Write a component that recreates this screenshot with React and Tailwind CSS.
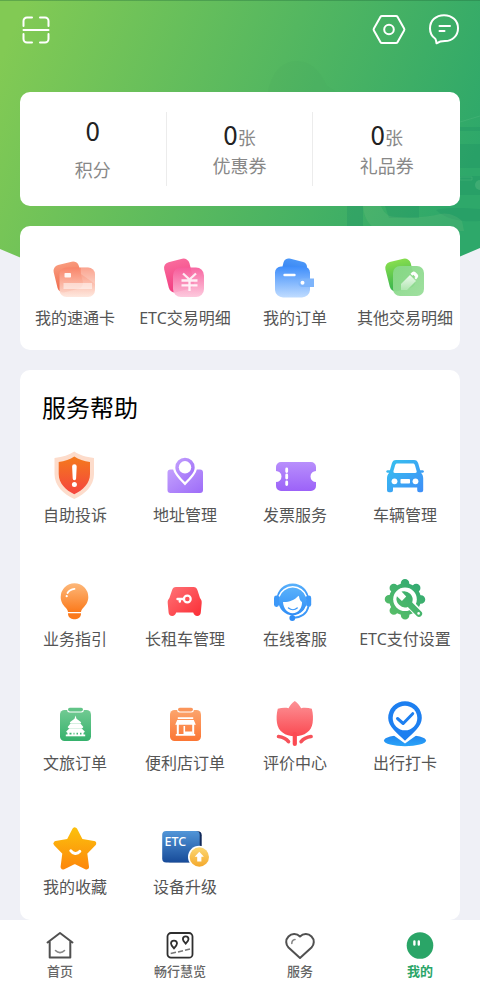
const Gradient = ({ id, from, to, diagonal }) => (
  <defs>
    <linearGradient id={id} x1="0" y1="0" x2={diagonal ? "1" : "0"} y2="1">
      <stop offset="0" stopColor={from} />
      <stop offset="1" stopColor={to} />
    </linearGradient>
  </defs>
);

const Icon = ({ children }) => (
  <svg viewBox="0 0 48 48" className="size-12" aria-hidden="true">
    {children}
  </svg>
);

/* Quick entries */
const CardIcon = () => (
  <Icon>
    <Gradient id="cardBack" from="#f99a7c" to="#ee6547" />
    <Gradient id="cardFront" from="#f98468" to="#fee6dc" />
    <rect x="4" y="9" width="26" height="28" rx="6" fill="url(#cardBack)" transform="rotate(-14 17 22)" />
    <rect x="8.5" y="13.5" width="35.5" height="29.5" rx="7" fill="url(#cardFront)" fillOpacity="0.92" />
    <path d="M30 13.5h7a7 7 0 0 1 7 7V30L30 20z" fill="#fff" opacity="0.2" />
    <rect x="13.5" y="19" width="6.5" height="4.5" rx="0.8" fill="#fff" opacity="0.9" />
    <rect x="12.5" y="29" width="28.5" height="6" fill="#fff" opacity="0.5" />
  </Icon>
);

const YenIcon = () => (
  <Icon>
    <Gradient id="yenBack" from="#f96a9c" to="#f23c80" />
    <Gradient id="yenFront" from="#f75c9b" to="#fdc5db" />
    <rect x="5" y="6" width="26" height="31" rx="6" fill="url(#yenBack)" transform="rotate(-14 18 21)" />
    <rect x="12" y="13.5" width="31" height="29.5" rx="8" fill="url(#yenFront)" fillOpacity="0.93" />
    <path
      d="M22 19.5l6.500 6 6.500-6M20.500 26.500h16M20.500 31.300h16M28.500 26v11"
      fill="none"
      stroke="#fff"
      strokeWidth="2.3"
      opacity="0.85"
    />
  </Icon>
);

const WalletIcon = () => (
  <Icon>
    <Gradient id="walletBack" from="#4b97f8" to="#2a78ee" />
    <Gradient id="walletFront" from="#3f8efb" to="#c0dcff" />
    <rect x="11" y="6" width="24" height="20" rx="5" fill="url(#walletBack)" transform="rotate(14 23 16)" />
    <path
      d="M10 12.5h23a6 6 0 0 1 6 6V36a8 8 0 0 1-8 7.5H12A8 8 0 0 1 4 36V18.5a6 6 0 0 1 6-6z"
      fill="url(#walletFront)"
    />
    <path d="M31.5 24.5H43V33H31.5a4.2 4.2 0 0 1 0-8.500z" fill="#7db4fb" />
    <circle cx="31.5" cy="28.7" r="2" fill="#fff" />
    <path d="M13.5 21h10" stroke="#fff" strokeWidth="2.4" strokeLinecap="round" />
  </Icon>
);

const PencilIcon = () => (
  <Icon>
    <Gradient id="noteBack" from="#86dd4e" to="#33b14e" />
    <Gradient id="noteFront" from="#86d886" to="#9ade9a" diagonal />
    <Gradient id="notePencil" from="#ffffff" to="#b6e8b6" />
    <rect x="6" y="6" width="26" height="30" rx="6" fill="url(#noteBack)" transform="rotate(-14 19 20)" />
    <rect x="12" y="12" width="31" height="30" rx="7" fill="url(#noteFront)" fillOpacity="0.95" />
    <path d="M20 36v-6l9-9 6 6-9 9z" fill="url(#notePencil)" opacity="0.85" />
    <path
      d="M29.5 19.8l1.5-1.5a2.5 2.5 0 0 1 3.5 0l2 2a2.5 2.5 0 0 1 0 3.5L35 25.500l-1.500-1.500 1-1-2.200-2.200-1 1z"
      fill="#fff"
    />
  </Icon>
);

/* Service entries */
const ShieldIcon = () => (
  <Icon>
    <Gradient id="shield" from="#f47a1c" to="#f5443f" />
    <path
      d="M23.3 0.500C28 4 35 6 43 7v16c0 12-9 20-19.700 25C12.500 43 3.500 35 3.500 23V7C11.500 6 18.500 4 23.300 0.500z"
      fill="#fddccb"
    />
    <path
      d="M23.3 5.500C27.500 8.500 33 10.300 39 11v12c0 9.500-7 16-15.700 20.300C14.700 39 7.700 32.500 7.700 23V11c6-.7 11.500-2.500 15.600-5.500z"
      fill="url(#shield)"
    />
    <path d="M21.1 15.5a2.3 2.3 0 0 1 4.600 0l-.6 12a1.700 1.700 0 0 1-3.400 0z" fill="#fff" />
    <circle cx="23.4" cy="33.5" r="2.5" fill="#fff" />
  </Icon>
);

const MapPinIcon = () => (
  <Icon>
    <Gradient id="mapPad" from="#c3a0fd" to="#9d6cf8" diagonal />
    <rect x="6.5" y="18.5" width="35.5" height="23.5" rx="3" fill="url(#mapPad)" />
    <path d="M24 4.500a12 12 0 0 0-12 12c0 6 6 11.500 12 18 6-6.500 12-12 12-18a12 12 0 0 0-12-12z" fill="#fff" />
    <path
      d="M24 6.700a9.700 9.700 0 0 0-9.700 9.700c0 5 5 9.600 9.700 14.600 4.700-5 9.700-9.600 9.700-14.600A9.700 9.700 0 0 0 24 6.700z"
      fill="url(#mapPad)"
    />
    <circle cx="24" cy="16.3" r="6.2" fill="#fff" />
  </Icon>
);

const TicketIcon = () => (
  <Icon>
    <Gradient id="ticket" from="#b88ffc" to="#9c62f8" />
    <path
      d="M10 11h30a5 5 0 0 1 5 5v4a5.500 5.500 0 0 0 0 11v4a5 5 0 0 1-5 5H10a5 5 0 0 1-5-5v-4a5.500 5.500 0 0 0 0-11v-4a5 5 0 0 1 5-5z"
      fill="url(#ticket)"
    />
    <path d="M15.7 18v2.500M15.700 24v3M15.700 31v2.500" stroke="#fff" strokeWidth="2.8" strokeLinecap="round" />
  </Icon>
);

const CarIcon = () => (
  <Icon>
    <Gradient id="car" from="#36c3ee" to="#3f8df8" diagonal />
    <path
      d="M15 9h18c2.300 0 3.600 1.200 4.200 3.300l2 7h2.600c1.600 0 1.600 2.500 0 2.500H40c1.500 1.500 2.200 3.500 2.200 5.500v12a2 2 0 0 1-2 2h-2a2 2 0 0 1-2-2v-2.800H12v2.800a2 2 0 0 1-2 2H8a2 2 0 0 1-2-2v-12c0-2 .7-4 2.200-5.500H6.400c-1.600 0-1.600-2.500 0-2.500h2.500l2-7C11.500 10.200 12.700 9 15 9z"
      fill="url(#car)"
    />
    <path
      d="M16.3 12.500h15.500c1.200 0 1.800.6 2.100 1.600l1.700 6c.3 1.200-.2 1.900-1.400 1.900H13.900c-1.200 0-1.700-.7-1.400-1.900l1.700-6c.3-1 .9-1.600 2.100-1.600z"
      fill="#fff"
    />
    <circle cx="13.5" cy="30.3" r="2.9" fill="#fff" />
    <circle cx="34.5" cy="30.3" r="2.9" fill="#fff" />
    <rect x="19.5" y="28" width="9.5" height="4.5" rx="0.8" fill="#fff" />
  </Icon>
);

const BulbIcon = () => (
  <Icon>
    <Gradient id="bulb" from="#fdb87a" to="#fb7a1c" />
    <path
      d="M23.5 8.300a13.800 13.800 0 0 0-13.800 13.800c0 4.800 2.400 8 5 10.700 1.300 1.400 2 2.600 2.300 4.200h13c.3-1.600 1-2.800 2.300-4.200 2.600-2.700 5-5.900 5-10.700A13.800 13.800 0 0 0 23.500 8.300z"
      fill="url(#bulb)"
    />
    <path d="M17 38.200h13v1a5.500 5.500 0 0 1-5.500 5h-2a5.500 5.500 0 0 1-5.500-5z" fill="#fb7a1c" />
    <path d="M16.500 18c1.300-2.300 3.600-3.900 7-4.200" fill="none" stroke="#fff" strokeWidth="1.8" strokeLinecap="round" />
    <circle cx="15.7" cy="21.2" r="1.1" fill="#fff" />
  </Icon>
);

const RentalCarIcon = () => (
  <Icon>
    <Gradient id="rental" from="#ff7377" to="#fb2d35" diagonal />
    <path
      d="M15 12h17.500c2.200 0 3.200 1 3.900 3l2.600 8c1.300 1.600 1.900 3 1.700 5l-.9 9.500c-.2 2-1.400 3.500-3.600 3.500-2 0-3.200-1.200-4-3.500H15.200c-.8 2.300-2 3.500-4 3.500-2.200 0-3.400-1.500-3.600-3.500L6.700 28c-.2-2 .4-3.400 1.700-5l2.700-8c.7-2 1.700-3 3.900-3z"
      fill="url(#rental)"
    />
    <circle cx="26.3" cy="24" r="3.4" fill="none" stroke="#fff" strokeWidth="2.2" />
    <path d="M23 24h-6.500M18.800 24v2.500" stroke="#fff" strokeWidth="2.4" strokeLinecap="round" />
  </Icon>
);

const SupportIcon = () => (
  <Icon>
    <Gradient id="support" from="#5ab2fb" to="#2f8df6" />
    <path d="M5.700 24a16 15.500 0 0 1 32 0z" fill="url(#support)" />
    <circle cx="21.7" cy="26" r="14.300" fill="url(#support)" />
    <path d="M8 21.500a14.300 13.500 0 0 1 27.400 0" fill="none" stroke="#fff" strokeWidth="1.5" />
    <rect x="3" y="20.5" width="5" height="11.5" rx="2.4" fill="#3c98f8" />
    <rect x="35.2" y="20.5" width="5" height="11.500" rx="2.4" fill="#3c98f8" />
    <path
      d="M12 27c6 .2 11-1.300 15.500-6.200 1.200.8.300 4.200 3.500 6.200.2 6-3.600 11.200-9.400 11.200-5.400 0-9.300-5-9.600-11.200z"
      fill="#fff"
    />
    <path d="M17.500 33c2.600 2.200 6.300 2.200 8.700 0" fill="none" stroke="#3c98f8" strokeWidth="1.4" strokeLinecap="round" />
    <path d="M37 32c-1.500 6-7 10.500-15.500 11" fill="none" stroke="#fff" strokeWidth="5" />
    <path d="M37.500 31.500c-1.500 6.500-7 11-16 11.500" fill="none" stroke="#3c98f8" strokeWidth="1.8" />
    <circle cx="21.3" cy="43" r="2.9" fill="#2f8df6" />
  </Icon>
);

const GearIcon = () => (
  <Icon>
    <defs>
      <linearGradient id="gear" gradientUnits="userSpaceOnUse" x1="40" y1="6" x2="10" y2="44">
        <stop offset="0" stopColor="#2fa873" />
        <stop offset="1" stopColor="#5abf66" />
      </linearGradient>
    </defs>
    <circle cx="24" cy="24.3" r="16" fill="url(#gear)" />
    <g stroke="url(#gear)" strokeWidth="8.5" strokeLinecap="round">
      <path d="M24 8.300l.1 32M8 24.300l32 .1M12.800 13.100l22.400 22.400M35.200 13.100l-22.400 22.400" />
    </g>
    <circle cx="24" cy="24.3" r="11.8" fill="#fff" />
    <path d="M27 27l10.500 11" stroke="#fff" strokeWidth="9" strokeLinecap="round" />
    <path
      d="M20.5 16.600a8.600 8.600 0 0 1 10.700 10.900l9 9a3.100 3.100 0 0 1-4.400 4.400l-9-9a8.600 8.600 0 0 1-10.900-10.700l5 4.700 4.300-4.300z"
      fill="url(#gear)"
    />
    <circle cx="37.6" cy="38.4" r="1.3" fill="#fff" />
  </Icon>
);

const TempleIcon = () => (
  <Icon>
    <Gradient id="temple" from="#71ca92" to="#35b16c" />
    <rect x="9" y="11" width="31" height="31" rx="4.5" fill="url(#temple)" />
    <rect x="16.200" y="8" width="16.6" height="5.5" rx="2.5" fill="#fff" />
    <rect x="17" y="8.7" width="15" height="3.7" rx="1.8" fill="#62c487" />
    <g fill="#fff">
      <path d="M24.500 16.500l1 3.200 4.700 3.500c-.3.900-.9 1.300-1.700 1.300h-8c-.8 0-1.400-.4-1.700-1.300l4.700-3.500z" />
      <path d="M19.500 24.500h10l2.800 3.500c-.3.900-.9 1.300-1.700 1.300H18.400c-.8 0-1.400-.4-1.700-1.300z" />
      <path d="M18.500 29.300h12l3.300 3.200c-.3.900-.9 1.300-1.700 1.300H16.900c-.8 0-1.400-.4-1.700-1.300z" />
      <path d="M16.500 33h2v3h-2zM20.500 33h2v3h-2zM23.500 33h2v3h-2zM27 33h2v3h-2zM30.500 33h2v3h-2z" />
      <rect x="14.8" y="35.5" width="19.4" height="1.8" />
    </g>
  </Icon>
);

const ShopIcon = () => (
  <Icon>
    <Gradient id="shop" from="#fca46c" to="#fb7634" />
    <rect x="9" y="11" width="31" height="31" rx="4.5" fill="url(#shop)" />
    <rect x="16.2" y="8" width="16.6" height="5.5" rx="2.5" fill="#fff" />
    <rect x="17" y="8.7" width="15" height="3.7" rx="1.8" fill="#fb955a" />
    <g fill="#fff">
      <path d="M16.8 18.300h15.400v1.800H16.800zM16.200 21h16.600l2 4.800H14.200z" />
      <path d="M15.800 25h2v11h-2zM31.200 25h2v11h-2z" />
      <path d="M22.500 27h1.600v9h-1.600zM14.800 35h19.400v1.800H14.800z" />
      <path d="M24 32.500h7.500V36H24z" />
    </g>
  </Icon>
);

const TulipIcon = () => (
  <Icon>
    <Gradient id="tulip" from="#fc9296" to="#fb4a52" />
    <path
      d="M23.8 2c2.700 1.800 4.900 4.300 6.300 7.300 3.200-.9 7.200-.4 10.700.4 1.400 5.300 1.400 9.800.8 14.300-1 8-8 13.200-17.800 13.200S7 32 6 24c-.6-4.500-.6-9 .8-14.300 3.500-.8 7.500-1.300 10.700-.4C18.900 6.300 21.100 3.800 23.800 2z"
      fill="url(#tulip)"
    />
    <path d="M23.8 35v10" stroke="#fb4a52" strokeWidth="4.2" strokeLinecap="round" />
    <path
      d="M7.500 37.500c4.500.5 7.700 2.200 10 5.200M40.100 37.500c-4.500.5-7.700 2.200-10 5.200"
      fill="none"
      stroke="#f6525a"
      strokeWidth="3.600"
      strokeLinecap="round"
    />
  </Icon>
);

const CheckInIcon = () => (
  <Icon>
    <Gradient id="checkPad" from="#1f83ee" to="#2aa4f8" />
    <ellipse cx="24" cy="41.5" rx="21" ry="5.7" fill="url(#checkPad)" />
    <path d="M10 34.500h28L24 44.500z" fill="#fff" />
    <path
      d="M24 2.200A16.800 16.800 0 0 0 7.200 19c0 8.500 8.500 14.700 16.800 22.700 8.300-8 16.800-14.200 16.800-22.700A16.800 16.800 0 0 0 24 2.200z"
      fill="#1d7ff0"
    />
    <circle cx="24" cy="19" r="12.3" fill="#fff" />
    <path d="M16.5 19.500l5.700 5 9.500-9.800" fill="none" stroke="#1d7ff0" strokeWidth="3" strokeLinecap="round" strokeLinejoin="round" />
  </Icon>
);

const StarIcon = () => (
  <Icon>
    <Gradient id="star" from="#fcbe0c" to="#fd8a0b" />
    <path
      d="M23.800 7l5.800 11.200 13 2.300-9 9.300 1.800 14-11.600-5.600-11.600 5.600 1.800-14-9-9.300 13-2.300z"
      fill="url(#star)"
      stroke="url(#star)"
      strokeWidth="5.2"
      strokeLinejoin="round"
    />
    <path d="M19.8 27.800c2 3.200 6.600 3.500 9 .6" fill="none" stroke="#fff" strokeWidth="3" strokeLinecap="round" />
  </Icon>
);

const DeviceIcon = () => (
  <Icon>
    <Gradient id="device" from="#5296d8" to="#174b99" />
    <Gradient id="coin" from="#fcd772" to="#f4a92c" />
    <rect x="5" y="8.3" width="35.7" height="31" rx="4" fill="#10295a" />
    <rect x="1.2" y="8" width="37.500" height="31.5" rx="4" fill="url(#device)" />
    <text x="3.500" y="23" fill="#fff" fontSize="12.500" fontWeight="500" fontFamily="Noto Sans, sans-serif">
      ETC
    </text>
    <circle cx="38.3" cy="34" r="11.3" fill="#fff" />
    <circle cx="38.3" cy="34" r="9.7" fill="url(#coin)" />
    <path d="M38.3 28.800l4.600 5h-2.500v4.800h-4.200v-4.800h-2.500z" fill="#fff" />
  </Icon>
);

/* Tab bar */
const HomeTab = () => (
  <svg viewBox="0 0 28 28" className="size-7" fill="none" stroke="#505050" strokeWidth="2" strokeLinecap="round" strokeLinejoin="round">
    <path d="M1.5 11.500L14 2l12.500 9.500M3.700 10.500v16h20.600v-16" />
    <path d="M9.500 19.500c2.500 2.800 6.500 2.800 9 0" stroke="#888" strokeWidth="1.6" />
  </svg>
);

const MapTab = () => (
  <svg viewBox="0 0 28 28" className="size-7" fill="none" stroke="#2f2f2f" strokeWidth="1.8">
    <rect x="1.5" y="2" width="25" height="24.7" rx="3.5" />
    <path d="M8 17.300c-1.800-2-3-3.200-3-4.700a3 3 0 0 1 6 0c0 1.500-1.200 2.700-3 4.700zM19.700 12.600c-1.700-1.900-2.800-3-2.800-4.400a2.800 2.800 0 0 1 5.600 0c0 1.400-1.100 2.500-2.800 4.400z" />
    <path d="M4.700 22.600l5.300-1.300M12 20.900l5-1.200M19 19.200l5-1.200" stroke="#777" strokeWidth="1.5" />
  </svg>
);

const HeartTab = () => (
  <svg viewBox="0 0 28 28" className="size-7 overflow-visible" fill="none" stroke="#505050" strokeWidth="2" strokeLinecap="round" strokeLinejoin="round">
    <path d="M14 5.500C10.500 2 5.500 2.500 2.500 5.500c-3.300 3.300-2.800 8 0 11L14 27l11.500-10.500c2.800-3 3.300-7.700 0-11-3-3-8-3.500-11.500 0z" />
    <path d="M5.800 12.500c0-2.300 1.200-3.700 3.200-4" stroke="#888" strokeWidth="1.6" />
  </svg>
);

const MineTab = () => (
  <svg viewBox="0 0 28 28" className="size-7">
    <circle cx="14" cy="14.5" r="13.3" fill="#2aa567" />
    <path d="M8.400 10.500v3M12.800 10.500v3" stroke="#fff" strokeWidth="2.4" strokeLinecap="round" />
  </svg>
);

const stats = [
  { label: "积分", value: 0 },
  { label: "优惠券", value: 0, unit: "张" },
  { label: "礼品券", value: 0, unit: "张" },
];

const quickLinks = [
  { label: "我的速通卡", icon: CardIcon },
  { label: "ETC交易明细", icon: YenIcon },
  { label: "我的订单", icon: WalletIcon },
  { label: "其他交易明细", icon: PencilIcon },
];

const services = [
  { label: "自助投诉", icon: ShieldIcon },
  { label: "地址管理", icon: MapPinIcon },
  { label: "发票服务", icon: TicketIcon },
  { label: "车辆管理", icon: CarIcon },
  { label: "业务指引", icon: BulbIcon },
  { label: "长租车管理", icon: RentalCarIcon },
  { label: "在线客服", icon: SupportIcon },
  { label: "ETC支付设置", icon: GearIcon },
  { label: "文旅订单", icon: TempleIcon },
  { label: "便利店订单", icon: ShopIcon },
  { label: "评价中心", icon: TulipIcon },
  { label: "出行打卡", icon: CheckInIcon },
  { label: "我的收藏", icon: StarIcon },
  { label: "设备升级", icon: DeviceIcon },
];

const tabs = [
  { label: "首页", icon: HomeTab },
  { label: "畅行慧览", icon: MapTab },
  { label: "服务", icon: HeartTab },
  { label: "我的", icon: MineTab, active: true },
];

const EntryGrid = ({ items }) => (
  <div className="grid grid-cols-4 gap-y-12">
    {items.map(({ label, icon: EntryIcon }) => (
      <a key={label} href="#" className="flex flex-col items-center gap-1">
        <EntryIcon />
        <span className="text-base leading-6 whitespace-nowrap text-[#555]">
          {label}
        </span>
      </a>
    ))}
  </div>
);

const HeaderBackground = () => (
  <svg
    viewBox="0 0 480 350"
    preserveAspectRatio="none"
    className="absolute inset-x-0 top-0 h-[350px] w-full"
    aria-hidden="true"
  >
    <defs>
      <linearGradient id="header" gradientUnits="userSpaceOnUse" x1="0" y1="60" x2="440" y2="240">
        <stop offset="0" stopColor="#82ca54" />
        <stop offset="0.55" stopColor="#54b760" />
        <stop offset="1" stopColor="#2ea86a" />
      </linearGradient>
      <clipPath id="headerShape">
        <path d="M0 0h480v248L240 350 0 249z" />
      </clipPath>
    </defs>
    <g clipPath="url(#headerShape)">
      <path d="M0 0h480v350H0z" fill="url(#header)" />
      <path d="M0 0h480v1H0z" fill="#1f6b3a" opacity="0.35" />
      <path d="M268 92c4-22 16-31 29-31 15 0 24 12 30 25l10 6z" fill="#3f9c58" opacity="0.08" />
      <g fill="#1d8f63" opacity="0.3">
        <path d="M460 127h20v4h-20zM460 144h20v24h-20zM460 176h20v19h-20z" />
        <path d="M347 206h16v20h-16zM385 206h34v12h-30z" />
        <path d="M436 210c12-3 30-2 44-1v12c-16 1-32 0-44-11z" />
      </g>
      <path
        d="M363 206h18c3 8 8 11 16 11 17 1 32 0 43-3 8-2 17 2 22 7l2 10h-84c-10-4-16-12-17-25z"
        fill="#7cc283"
        opacity="0.2"
      />
      <path d="M460 122l20-6M460 177h12v3h-12z" stroke="#5fbf86" fill="none" opacity="0.3" />
      <circle cx="480" cy="185" r="5" fill="#5fbf86" opacity="0.4" />
    </g>
  </svg>
);

const App = () => {
  return (
    <div className="relative flex min-h-screen flex-col bg-[#eff0f6] font-['Noto_Sans','Noto_Sans_CJK_SC',sans-serif]">
      <HeaderBackground />

      <header className="relative flex h-[60px] items-center justify-between pr-5 pl-[22px]">
        <button type="button" aria-label="扫一扫">
          <svg viewBox="0 0 28 28" className="size-7" fill="none" stroke="#fff" strokeWidth="2" strokeLinecap="round">
            <path d="M1.5 10V5A3.500 3.500 0 0 1 5 1.500h5M18 1.500h5A3.500 3.500 0 0 1 26.500 5v5M1.500 18v5A3.500 3.500 0 0 0 5 26.500h5M18 26.500h5a3.500 3.500 0 0 0 3.500-3.500v-5M1.500 14h25" />
          </svg>
        </button>
        <div className="flex gap-6">
          <button type="button" aria-label="设置">
            <svg viewBox="0 0 32 32" className="size-8 overflow-visible" fill="none" stroke="#fff" strokeWidth="2" strokeLinejoin="round">
              <path d="M10 2h14c.8 0 1.200.3 1.600.9l6.500 11.600c.4.700.4 1.300 0 2l-6.500 11.600c-.4.600-.8.900-1.600.9H10c-.8 0-1.200-.3-1.600-.9L1.900 16.500c-.4-.7-.4-1.300 0-2L8.400 2.900c.4-.6.8-.9 1.600-.9z" />
              <circle cx="17" cy="15.5" r="4.8" />
            </svg>
          </button>
          <button type="button" aria-label="消息">
            <svg viewBox="0 0 32 32" className="size-8" fill="none" stroke="#fff" strokeWidth="2" strokeLinecap="round" strokeLinejoin="round">
              <path d="M16 1.200c8 0 14 5.300 14 13 0 7.300-5.500 12.800-13 12.800-3.200 0-5.500.3-8.500 2.300-.2-1.700-.4-3.200-1.200-4.500C4 22.500 2 19 2 14.500 2 6.500 8 1.200 16 1.200z" />
              <path d="M11.500 12h10.500M11.500 17h5" />
            </svg>
          </button>
        </div>
      </header>

      <main className="relative mt-8 flex flex-1 flex-col gap-5 px-5">
        {/* Points and coupons */}
        <section className="grid grid-cols-3 divide-x divide-[#ececec] rounded-[10px] bg-white py-5">
          {stats.map(({ label, value, unit }) => (
            <a
              key={label}
              href="#"
              className={`flex h-[74px] flex-col items-center justify-center pt-0.5 ${unit ? "gap-0" : "gap-2"}`}
            >
              <span className="text-lg leading-7 text-[#888]">
                <span className="font-['Noto_Sans_CJK_SC',sans-serif] text-[26px] text-[#222]">
                  {value}
                </span>
                {unit}
              </span>
              <span className="text-lg leading-7 text-[#888]">{label}</span>
            </a>
          ))}
        </section>

        <section className="rounded-[10px] bg-white pt-7 pb-5">
          <EntryGrid items={quickLinks} />
        </section>

        <section className="flex-1 rounded-[10px] bg-white pt-5 pb-5">
          <h2 className="mb-[25px] pl-[22px] text-2xl leading-9 text-black">
            服务帮助
          </h2>
          <EntryGrid items={services} />
        </section>
      </main>

      <nav className="sticky bottom-0 grid grid-cols-4 bg-white pt-[11px] pb-[9px]">
        {tabs.map(({ label, icon: TabIcon, active }) => (
          <a key={label} href="#" className="flex flex-col items-center gap-[3px]">
            <TabIcon />
            <span
              className={`text-[13px] leading-[18px] ${active ? "font-bold text-[#2aa567]" : "font-medium text-[#666]"}`}
            >
              {label}
            </span>
          </a>
        ))}
      </nav>
    </div>
  );
};

export default App;
